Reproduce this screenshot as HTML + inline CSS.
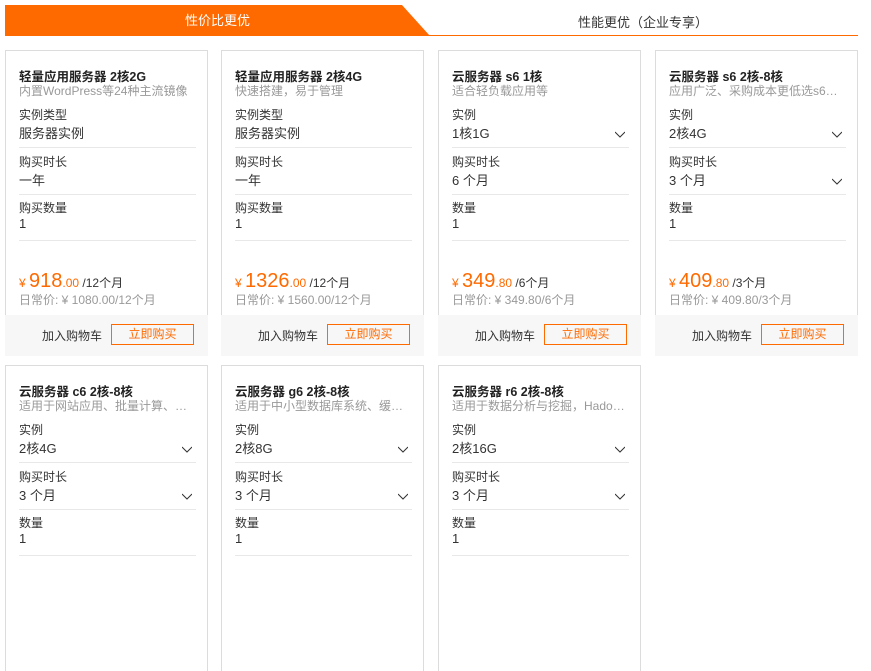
<!DOCTYPE html>
<html><head><meta charset="utf-8"><style>
*{margin:0;padding:0;box-sizing:border-box}
body{width:871px;height:571px;background:#fff;font-family:"Liberation Sans","Noto Sans CJK SC",sans-serif;position:relative;overflow:hidden;color:#333}
.tab{position:absolute;left:5px;top:5px;width:425px;height:31px;background:#ff6a00;clip-path:polygon(0 0,397px 0,425px 31px,0 31px);color:#fff;font-size:13px;line-height:31px}
.tab span{position:absolute;left:0;width:425px;text-align:center}
.line{position:absolute;left:428px;top:35px;width:430px;height:1px;background:#ff6a00}
.tab2{position:absolute;left:563px;top:12px;font-size:13px;color:#333;width:160px;text-align:center}
.card{position:absolute;width:203px;height:306px;border:1px solid #dcdcdc;border-bottom:none}
.t{position:absolute;left:13px;top:15px;font-size:12.5px;font-weight:bold;color:#222}
.s{position:absolute;left:13px;top:31px;font-size:12px;color:#999;white-space:nowrap;width:180px;overflow:hidden}
.l{position:absolute;left:13px;font-size:12px;color:#333}
.v{position:absolute;left:13px;font-size:13px;color:#333}
.d{position:absolute;left:13px;width:177px;height:1px;background:#e8e8e8}
.ch{position:absolute;left:176px;width:10px;height:10px}
.p{position:absolute;left:13px;top:219px;color:#ff6a00;font-size:12px;white-space:nowrap}
.p b{font-weight:normal;font-size:20px}
.p i{font-style:normal;color:#333}
.o{position:absolute;left:13px;top:240px;font-size:12px;color:#999}
.f{position:absolute;left:-1px;top:264px;width:203px;height:41px;background:#f7f7f7}
.f .a{position:absolute;left:37px;top:12px;font-size:12px;color:#333}
.f .b{position:absolute;left:106px;top:9px;width:83px;height:21px;border:1px solid #ff6a00;color:#ff6a00;font-size:12px;text-align:center;line-height:19px}
</style></head><body>
<div class="tab"><span>性价比更优</span></div>
<div class="line"></div>
<div class="tab2">性能更优（企业专享）</div>

<div class="card" style="left:5px;top:50px">
<div class="t">轻量应用服务器 2核2G</div><div class="s">内置WordPress等24种主流镜像</div>
<div class="l" style="top:55px">实例类型</div><div class="v" style="top:72px">服务器实例</div><div class="d" style="top:96px"></div>
<div class="l" style="top:102px">购买时长</div><div class="v" style="top:119px">一年</div><div class="d" style="top:143px"></div>
<div class="l" style="top:148px">购买数量</div><div class="v" style="top:165px">1</div><div class="d" style="top:189px"></div>
<div class="p">¥ <b>918</b>.00 <i>/12个月</i></div><div class="o">日常价: ¥ 1080.00/12个月</div>
<div class="f"><span class="a">加入购物车</span><span class="b">立即购买</span></div></div>

<div class="card" style="left:221px;top:50px">
<div class="t">轻量应用服务器 2核4G</div><div class="s">快速搭建，易于管理</div>
<div class="l" style="top:55px">实例类型</div><div class="v" style="top:72px">服务器实例</div><div class="d" style="top:96px"></div>
<div class="l" style="top:102px">购买时长</div><div class="v" style="top:119px">一年</div><div class="d" style="top:143px"></div>
<div class="l" style="top:148px">购买数量</div><div class="v" style="top:165px">1</div><div class="d" style="top:189px"></div>
<div class="p">¥ <b>1326</b>.00 <i>/12个月</i></div><div class="o">日常价: ¥ 1560.00/12个月</div>
<div class="f"><span class="a">加入购物车</span><span class="b">立即购买</span></div></div>

<div class="card" style="left:438px;top:50px">
<div class="t">云服务器 s6 1核</div><div class="s">适合轻负载应用等</div>
<div class="l" style="top:55px">实例</div><div class="v" style="top:72px">1核1G</div><svg class="ch" style="top:78px" viewBox="0 0 10 10"><path d="M0 3L5 8L10 3" fill="none" stroke="#333"/></svg><div class="d" style="top:96px"></div>
<div class="l" style="top:102px">购买时长</div><div class="v" style="top:119px">6 个月</div><div class="d" style="top:143px"></div>
<div class="l" style="top:148px">数量</div><div class="v" style="top:165px">1</div><div class="d" style="top:189px"></div>
<div class="p">¥ <b>349</b>.80 <i>/6个月</i></div><div class="o">日常价: ¥ 349.80/6个月</div>
<div class="f"><span class="a">加入购物车</span><span class="b">立即购买</span></div></div>

<div class="card" style="left:655px;top:50px">
<div class="t">云服务器 s6 2核-8核</div><div class="s">应用广泛、采购成本更低选s6…</div>
<div class="l" style="top:55px">实例</div><div class="v" style="top:72px">2核4G</div><svg class="ch" style="top:78px" viewBox="0 0 10 10"><path d="M0 3L5 8L10 3" fill="none" stroke="#333"/></svg><div class="d" style="top:96px"></div>
<div class="l" style="top:102px">购买时长</div><div class="v" style="top:119px">3 个月</div><svg class="ch" style="top:125px" viewBox="0 0 10 10"><path d="M0 3L5 8L10 3" fill="none" stroke="#333"/></svg><div class="d" style="top:143px"></div>
<div class="l" style="top:148px">数量</div><div class="v" style="top:165px">1</div><div class="d" style="top:189px"></div>
<div class="p">¥ <b>409</b>.80 <i>/3个月</i></div><div class="o">日常价: ¥ 409.80/3个月</div>
<div class="f"><span class="a">加入购物车</span><span class="b">立即购买</span></div></div>

<div class="card" style="left:5px;top:365px">
<div class="t">云服务器 c6 2核-8核</div><div class="s">适用于网站应用、批量计算、…</div>
<div class="l" style="top:55px">实例</div><div class="v" style="top:72px">2核4G</div><svg class="ch" style="top:78px" viewBox="0 0 10 10"><path d="M0 3L5 8L10 3" fill="none" stroke="#333"/></svg><div class="d" style="top:96px"></div>
<div class="l" style="top:102px">购买时长</div><div class="v" style="top:119px">3 个月</div><svg class="ch" style="top:125px" viewBox="0 0 10 10"><path d="M0 3L5 8L10 3" fill="none" stroke="#333"/></svg><div class="d" style="top:143px"></div>
<div class="l" style="top:148px">数量</div><div class="v" style="top:165px">1</div><div class="d" style="top:189px"></div></div>

<div class="card" style="left:221px;top:365px">
<div class="t">云服务器 g6 2核-8核</div><div class="s">适用于中小型数据库系统、缓…</div>
<div class="l" style="top:55px">实例</div><div class="v" style="top:72px">2核8G</div><svg class="ch" style="top:78px" viewBox="0 0 10 10"><path d="M0 3L5 8L10 3" fill="none" stroke="#333"/></svg><div class="d" style="top:96px"></div>
<div class="l" style="top:102px">购买时长</div><div class="v" style="top:119px">3 个月</div><svg class="ch" style="top:125px" viewBox="0 0 10 10"><path d="M0 3L5 8L10 3" fill="none" stroke="#333"/></svg><div class="d" style="top:143px"></div>
<div class="l" style="top:148px">数量</div><div class="v" style="top:165px">1</div><div class="d" style="top:189px"></div></div>

<div class="card" style="left:438px;top:365px">
<div class="t">云服务器 r6 2核-8核</div><div class="s">适用于数据分析与挖掘，Hado…</div>
<div class="l" style="top:55px">实例</div><div class="v" style="top:72px">2核16G</div><svg class="ch" style="top:78px" viewBox="0 0 10 10"><path d="M0 3L5 8L10 3" fill="none" stroke="#333"/></svg><div class="d" style="top:96px"></div>
<div class="l" style="top:102px">购买时长</div><div class="v" style="top:119px">3 个月</div><svg class="ch" style="top:125px" viewBox="0 0 10 10"><path d="M0 3L5 8L10 3" fill="none" stroke="#333"/></svg><div class="d" style="top:143px"></div>
<div class="l" style="top:148px">数量</div><div class="v" style="top:165px">1</div><div class="d" style="top:189px"></div></div>
</body></html>
